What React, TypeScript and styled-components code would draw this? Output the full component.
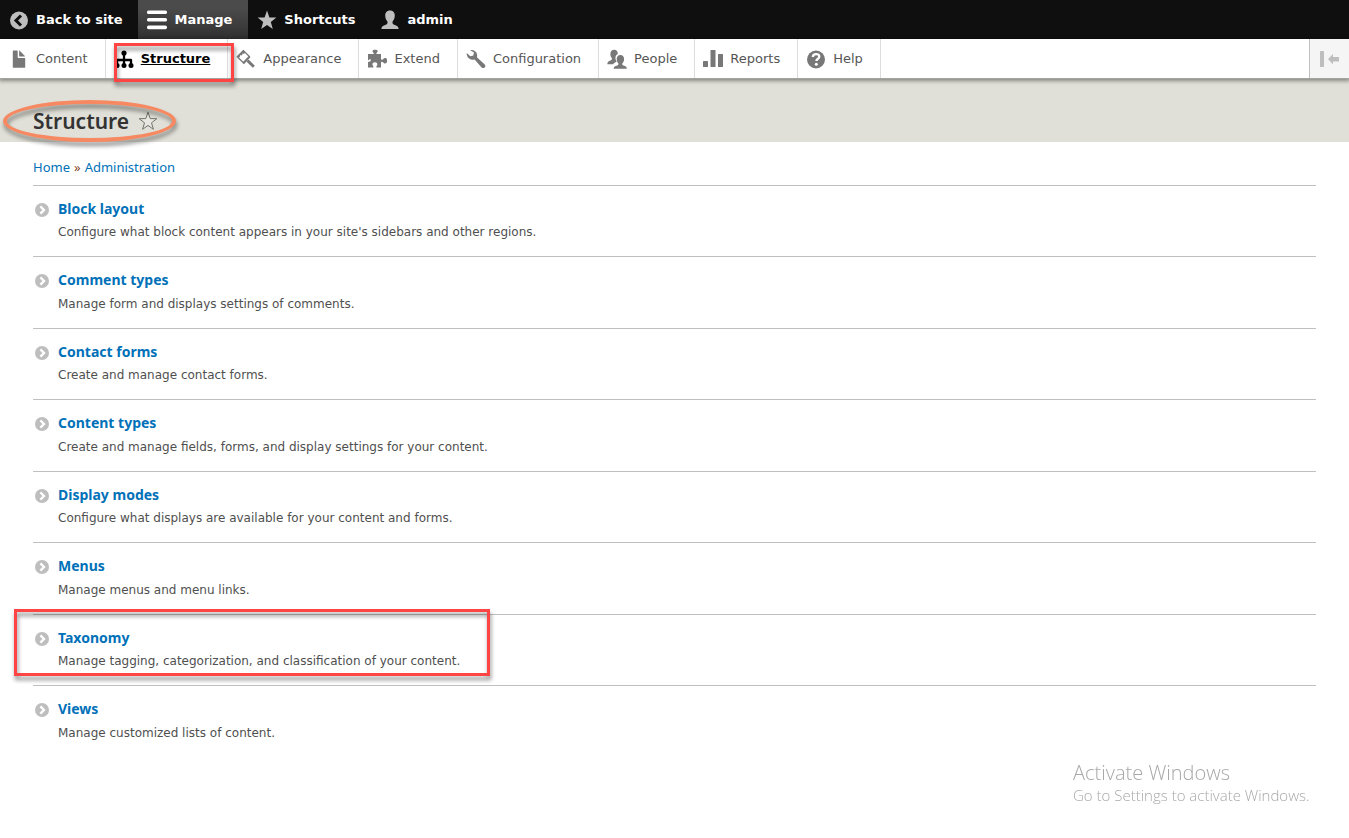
import React from 'react';
import styled, { createGlobalStyle, css } from 'styled-components';

const uiFont = '"DejaVu Sans", Verdana, sans-serif';
const bodyFont = '"Noto Sans", "Lucida Grande", sans-serif';

const GlobalStyle = createGlobalStyle`
  *, *::before, *::after { box-sizing: border-box; }
  body {
    margin: 0;
    background: #fff;
    color: #333;
    font-family: ${bodyFont};
    font-size: 13px;
  }
  ul, ol { list-style: none; margin: 0; padding: 0; }
  a { text-decoration: none; color: inherit; }
`;

const Bar = styled.nav`
  display: flex;
  height: 39px;
  background: #0f0f0f;
  font-family: ${uiFont};
`;

const BarLink = styled.a<{ $active?: boolean }>`
  display: flex;
  align-items: center;
  gap: 7px;
  padding: 0 16px 0 9px;
  color: #fff;
  font-size: 13px;
  font-weight: bold;
  white-space: nowrap;
  ${(p) =>
    p.$active &&
    css`
      background-image: linear-gradient(rgba(255, 255, 255, 0.25) 20%, rgba(255, 255, 255, 0) 200%);
    `}
`;

const Tray = styled.nav`
  position: relative;
  z-index: 1;
  display: flex;
  justify-content: space-between;
  height: 40px;
  background: #fff;
  border-bottom: 1px solid #a3a39f;
  box-shadow: 0 1px 4px 1px rgba(0, 0, 0, 0.4);
  font-family: ${uiFont};
`;

const TrayMenu = styled.ul`
  display: flex;
  padding-left: 1px;
`;

const TrayItem = styled.li`
  position: relative;
  display: flex;
  border-right: 1px solid #ddd;
`;

const TrayLink = styled.a<{ $active?: boolean }>`
  display: flex;
  align-items: center;
  gap: 7px;
  padding: 0 17px 0 8px;
  color: ${(p) => (p.$active ? '#000' : '#565656')};
  font-size: 13px;
  font-weight: ${(p) => (p.$active ? 'bold' : 'normal')};
  white-space: nowrap;
  span { text-decoration: ${(p) => (p.$active ? 'underline' : 'none')}; }
`;

const CollapseButton = styled.button`
  display: flex;
  align-items: center;
  justify-content: center;
  width: 40px;
  padding: 0;
  border: 0;
  border-left: 1px solid #c0c0c0;
  background: #f5f5f5;
`;

const Glyph = styled.svg`
  flex: none;
  width: 20px;
  height: 20px;
`;

const Highlight = styled.span`
  position: absolute;
  pointer-events: none;
  border: 3px solid #ff4444;
  filter: drop-shadow(1px 4px 2px rgba(0, 0, 0, 0.45));
`;

const TabHighlight = styled(Highlight)`
  top: 4px;
  left: 8px;
  width: 120px;
  height: 39px;
`;

const RowHighlight = styled(Highlight)`
  top: -6px;
  left: -19px;
  width: 476px;
  height: 67px;
`;

const TitleHighlight = styled(Highlight)`
  top: -2px;
  left: -30px;
  width: 173px;
  height: 42px;
  border: 4px solid #f68961;
  border-radius: 50%;
`;

const Header = styled.header`
  display: flex;
  padding: 23px 33px 0;
  height: 63px;
  background: #e0e0d8;
`;

const TitleGroup = styled.div`
  position: relative;
  display: flex;
  align-items: center;
  gap: 9px;
  height: 38px;
`;

const Title = styled.h1`
  margin: 0;
  font-size: 21px;
  font-weight: 600;
  line-height: 38px;
`;

const StarButton = styled.button`
  display: flex;
  padding: 0;
  border: 0;
  background: none;
`;

const Main = styled.main`
  padding: 15px 33px 70px;
`;

const Breadcrumb = styled.ol`
  display: flex;
  gap: 4px;
  height: 28px;
  line-height: 20px;
  color: #8a4a2c;
  a { color: #0071b8; }
`;

const Description = styled.p`
  margin: 3px 0 0;
  color: #4f4f4f;
  font-family: ${uiFont};
  font-size: 12px;
  line-height: 20px;
`;

const AdminList = styled.ul``;

const AdminItem = styled.li`
  position: relative;
  display: grid;
  grid-template-columns: 25px 1fr;
  height: 71px;
  padding-top: 13px;
  border-top: 1px solid #bfbfbf;
  &:nth-child(even) { height: 72px; }
  &:nth-child(even) ${Description} { margin-top: 4px; }
`;

const Bullet = styled.svg`
  width: 14px;
  height: 14px;
  margin: 4px 0 0 2px;
`;

const ItemTitle = styled.a`
  display: block;
  width: max-content;
  color: #0071b8;
  font-size: 14px;
  font-weight: bold;
  line-height: 20px;
`;

const Watermark = styled.aside`
  position: fixed;
  right: 40px;
  bottom: 33px;
  width: 236px;
  color: #a8a8a8;
  font-family: "Open Sans", "Segoe UI", sans-serif;
  font-weight: 300;
  white-space: nowrap;
  pointer-events: none;
`;

const WatermarkTitle = styled.div`
  font-size: 20px;
  line-height: 24px;
`;

const WatermarkText = styled.div`
  font-size: 15px;
  line-height: 20px;
`;

type IconName =
  | 'back' | 'menu' | 'star' | 'user' | 'file' | 'structure' | 'appearance'
  | 'extend' | 'config' | 'people' | 'reports' | 'help' | 'collapse';

const shapes: Record<IconName, React.ReactNode> = {
  back: (
    <>
      <circle cx="10" cy="10.500" r="9" fill="#bebebe" />
      <path d="M12 5.500l-5 5 5 5" fill="none" stroke="#0f0f0f" strokeWidth="3" />
    </>
  ),
  menu: (
    <g fill="#fff">
      <rect y="0.500" width="20" height="3.600" rx="1.600" />
      <rect y="8" width="20" height="3.600" rx="1.600" />
      <rect y="15.600" width="20" height="3.600" rx="1.600" />
    </g>
  ),
  star: <path fill="#bebebe" d="M10 .5l2.400 6.900 7 .1-5.600 4.400 2 7.100L10 14.900l-5.800 4.100 2-7.100L.6 7.500l7-.1z" />,
  user: (
    <path fill="#bebebe" d="M10 .5c3.200 0 4.800 2.200 4.800 5 0 2.600-1 4.600-2.200 5.900-.4 1.700.1 2.700 1.600 3.300 2.800 1 4.300 1.900 4.500 4.300H1.300c.2-2.400 1.700-3.300 4.500-4.300 1.500-.6 2-1.600 1.600-3.300C6.200 10.100 5.200 8.100 5.200 5.500c0-2.800 1.600-5 4.800-5z" />
  ),
  file: (
    <g fill="#787878">
      <path d="M4.400 1.500h3.700c.4 0 .6.2.6.600v6.200c0 .4.300.600.700.600h6.200c.4 0 .6.300.6.700v8.600c0 .4-.2.600-.6.600H4.400c-.4 0-.6-.2-.6-.600V2.100c0-.4.200-.600.600-.600z" />
      <path d="M10.100 2c0-.500.300-.5.600-.2l5.200 5.200c.3.300.2.500-.2.500h-5c-.400 0-.600-.2-.600-.600z" />
    </g>
  ),
  structure: (
    <g fill="#000">
      <circle cx="10" cy="4" r="2.600" />
      <circle cx="3" cy="16.400" r="2.500" />
      <circle cx="10" cy="16.400" r="2.500" />
      <circle cx="17" cy="16.400" r="2.500" />
      <path d="M10 4v12M3 16v-5h14v5" fill="none" stroke="#000" strokeWidth="2.300" strokeLinejoin="round" />
    </g>
  ),
  appearance: (
    <g fill="none" stroke="#787878">
      <path d="M1.300 7.800L7.400 1.600l6 6-5.600 6.600z" strokeWidth="1.300" />
      <path fill="#787878" stroke="none" d="M.8 7.700L7.300 1l2 2-1.200 2.100-1.500-.6-.6 2-1.700-.4-.6 2.200z" />
      <path d="M7.500 14l6.200-6.500" strokeWidth="2" />
      <path d="M11.500 11.500l6.300 6.300" strokeWidth="3" />
    </g>
  ),
  extend: (
    <path fill="#787878" d="M1 5h5.800c.3-1-1.300-1.600-1.300-2.700C5.500 1 7 .7 8.100.7s2.600.3 2.600 1.600c0 1.100-1.600 1.700-1.300 2.700H14v4.600c.2 1.600 1.200 1.400 2 .7.800-.8 1.300-1.200 2.200-1.200 1.200 0 2 1.200 2 2.700s-.8 2.700-2 2.700c-.9 0-1.400-.4-2.200-1.200-.8-.7-1.800-.9-2 .700v4.500H9.500c-.7-1.300.9-1.800.9-3.200 0-1.300-1.200-2.100-2.500-2.100s-2.500.8-2.500 2.100c0 1.400 1.600 1.900.9 3.200H1v-5.200c.8-.9 2.700.1 2.700-2.300S1.800 11.100 1 11.400z" />
  ),
  config: (
    <path fill="#787878" d="M4.200 1.300c2.900-.8 6.200 1 6.900 4.100.2 1.200.1 2.100-.2 2.900l7.600 6.900c1.100 1 1.100 2.400.2 3.300s-2.300.8-3.300-.3L8.600 10.500c-3.300 1-6.800-.8-7.700-4.300-.2-.7-.200-1.400-.1-2.100l3.500 3.200 3-.9.700-3.000z" />
  ),
  people: (
    <g fill="#787878">
      <path d="M7.200.8c2.400 0 3.700 1.700 3.600 4.100-2.300.9-2.800 3.600-2 6.100.2.700.6 1.300.9 1.800-1.600.8-2.700 1-3.500 2.500H.3c.1-2.400 1.200-3 3.200-3.700 1.300-.5 1.700-1.300 1.300-2.500C3.800 8 3.400 6.500 3.400 4.900 3.400 2.500 4.700.8 7.200.8z" />
      <path d="M13.400 6c2.500 0 3.700 1.700 3.700 4 0 1.900-.7 3.400-1.700 4.300-.3 1.300 0 1.900 1.100 2.300 2 .700 3.200 1.200 3.400 3.100H6.600c.2-1.900 1.500-2.400 3.500-3.100 1.200-.4 1.500-1 1.200-2.300-1-.9-1.600-2.400-1.600-4.300 0-2.300 1.200-4 3.700-4z" />
    </g>
  ),
  reports: (
    <g fill="#787878">
      <rect x="0" y="12" width="5" height="6" rx=".5" />
      <rect x="7.500" y="1" width="5" height="17" rx=".5" />
      <rect x="15" y="5" width="5" height="13" rx=".5" />
    </g>
  ),
  help: (
    <>
      <circle cx="10" cy="10.500" r="9" fill="#787878" />
      <path d="M6.800 8c.1-2 1.500-2.900 3.300-2.900s3.200 1 3.200 2.600c0 2.100-2.900 2-2.900 4.300" fill="none" stroke="#fff" strokeWidth="2.300" />
      <circle cx="10.300" cy="15.200" r="1.500" fill="#fff" />
    </>
  ),
  collapse: (
    <g fill="#bebebe">
      <rect x="0" y="2" width="4" height="16" rx=".5" />
      <path d="M8 10l5-5v3h6v4.500h-6v3z" />
    </g>
  ),
};

const Icon = ({ name }: { name: IconName }) => (
  <Glyph viewBox="0 0 20 20" aria-hidden="true">{shapes[name]}</Glyph>
);

const barLinks: { label: string; icon: IconName; active?: boolean }[] = [
  { label: 'Back to site', icon: 'back' },
  { label: 'Manage', icon: 'menu', active: true },
  { label: 'Shortcuts', icon: 'star' },
  { label: 'admin', icon: 'user' },
];

const trayLinks: { label: string; icon: IconName; active?: boolean }[] = [
  { label: 'Content', icon: 'file' },
  { label: 'Structure', icon: 'structure', active: true },
  { label: 'Appearance', icon: 'appearance' },
  { label: 'Extend', icon: 'extend' },
  { label: 'Configuration', icon: 'config' },
  { label: 'People', icon: 'people' },
  { label: 'Reports', icon: 'reports' },
  { label: 'Help', icon: 'help' },
];

const sections: { title: string; text: string; marked?: boolean }[] = [
  { title: 'Block layout', text: "Configure what block content appears in your site's sidebars and other regions." },
  { title: 'Comment types', text: 'Manage form and displays settings of comments.' },
  { title: 'Contact forms', text: 'Create and manage contact forms.' },
  { title: 'Content types', text: 'Create and manage fields, forms, and display settings for your content.' },
  { title: 'Display modes', text: 'Configure what displays are available for your content and forms.' },
  { title: 'Menus', text: 'Manage menus and menu links.' },
  { title: 'Taxonomy', text: 'Manage tagging, categorization, and classification of your content.', marked: true },
  { title: 'Views', text: 'Manage customized lists of content.' },
];

export default function App() {
  return (
    <>
      <GlobalStyle />
      <Bar aria-label="Toolbar">
        {barLinks.map((l) => (
          <BarLink key={l.label} href="#" $active={l.active}>
            <Icon name={l.icon} />
            <span>{l.label}</span>
          </BarLink>
        ))}
      </Bar>
      <Tray aria-label="Administration menu">
        <TrayMenu>
          {trayLinks.map((l) => (
            <TrayItem key={l.label}>
              <TrayLink href="#" $active={l.active}>
                <Icon name={l.icon} />
                <span>{l.label}</span>
              </TrayLink>
              {l.active && <TabHighlight />}
            </TrayItem>
          ))}
        </TrayMenu>
        <CollapseButton aria-label="Vertical orientation">
          <Icon name="collapse" />
        </CollapseButton>
      </Tray>
      <Header>
        <TitleGroup>
          <Title>Structure</Title>
          <StarButton aria-label="Add to shortcuts">
            <Glyph viewBox="0 0 20 20" aria-hidden="true">
              <path d="M10 1.200l2.200 6.400 6.600.1-5.300 4.100 1.900 6.500-5.400-3.900-5.400 3.900 1.900-6.500L1.200 7.700l6.600-.1z" fill="#e8e8e2" stroke="#73736c" strokeWidth="1" />
            </Glyph>
          </StarButton>
          <TitleHighlight />
        </TitleGroup>
      </Header>
      <Main>
        <nav aria-label="Breadcrumb">
          <Breadcrumb>
            <li><a href="#">Home</a></li>
            <li aria-hidden="true">»</li>
            <li><a href="#">Administration</a></li>
          </Breadcrumb>
        </nav>
        <AdminList>
          {sections.map((s) => (
            <AdminItem key={s.title}>
              <Bullet viewBox="0 0 14 14" aria-hidden="true">
                <circle cx="7" cy="7" r="7" fill="#bebebe" />
                <path d="M5.400 3.400L9 7l-3.600 3.600" fill="none" stroke="#fff" strokeWidth="2.300" />
              </Bullet>
              <div>
                <ItemTitle href="#">{s.title}</ItemTitle>
                <Description>{s.text}</Description>
              </div>
              {s.marked && <RowHighlight />}
            </AdminItem>
          ))}
        </AdminList>
      </Main>
      <Watermark>
        <WatermarkTitle>Activate Windows</WatermarkTitle>
        <WatermarkText>Go to Settings to activate Windows.</WatermarkText>
      </Watermark>
    </>
  );
}
